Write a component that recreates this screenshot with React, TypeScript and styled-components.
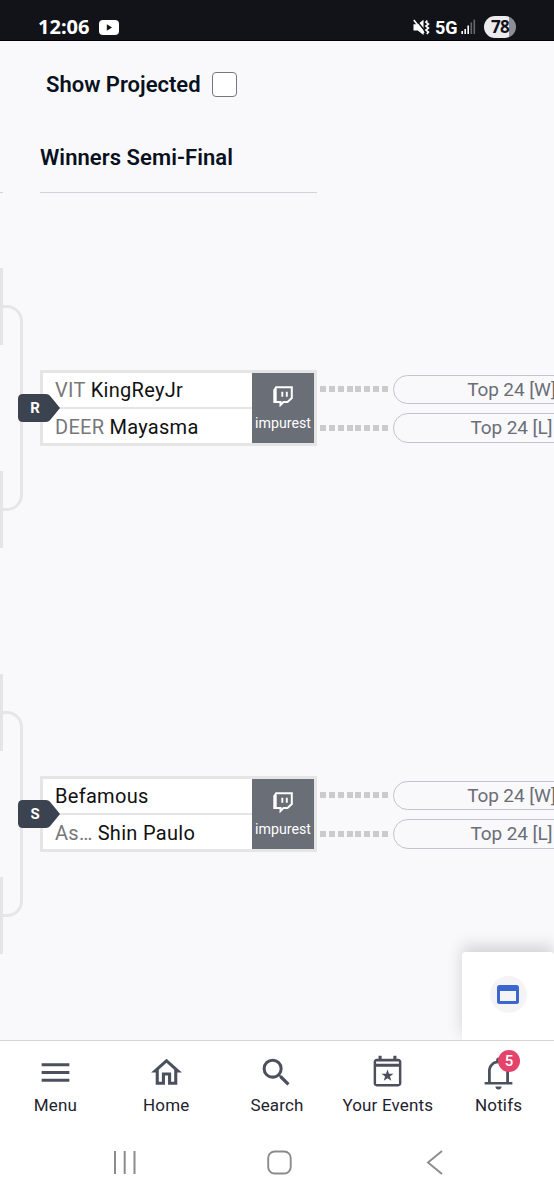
import React from "react";
import styled, { createGlobalStyle } from "styled-components";

const Global = createGlobalStyle`
  *, *::before, *::after { box-sizing: border-box; }
  body { margin: 0; background: #fff; font-family: Roboto, "Liberation Sans", sans-serif; overflow: hidden; }
`;

const Screen = styled.div`
  width: 554px;
  height: 1200px;
  display: flex;
  flex-direction: column;
  overflow: hidden;
`;

const StatusBar = styled.header`
  height: 41px;
  flex: none;
  display: flex;
  align-items: flex-start;
  background: #121319;
  border-bottom: 1px solid #020204;
  color: #fff;
  padding: 15px 38px 0 38px;
`;

const Clock = styled.span`
  font: 700 20px/24px "Noto Sans", sans-serif;
  width: 52px;
  white-space: nowrap;
`;

const StatusIcon = styled.svg<{ $left?: number; $top?: number }>`
  flex: none;
  margin-left: ${(p) => p.$left ?? 0}px;
  margin-top: ${(p) => p.$top ?? 0}px;
`;

const Spacer = styled.div`
  flex: 1;
`;

const Network = styled.span`
  font: 700 18px/22px Roboto, sans-serif;
  margin-left: 5px;
  margin-top: 2px;
  width: 24px;
  white-space: nowrap;
`;

const Battery = styled.span`
  width: 32px;
  height: 22px;
  border-radius: 11px;
  margin-left: 8px;
  margin-top: 1px;
  background: linear-gradient(90deg, #ececef 0 25px, #8d8d92 25px);
  color: #121319;
  font: 700 17px/22px "Noto Sans", sans-serif;
  text-align: center;
  letter-spacing: -0.6px;
`;

const Main = styled.main`
  position: relative;
  height: 999px;
  flex: none;
  overflow: hidden;
  background: #f9f9fc;
`;

const ProjectedToggle = styled.label`
  display: flex;
  align-items: center;
  height: 28px;
  margin: 29px 0 0 46px;
  color: #091120;
  font-size: 22px;
  font-weight: 600;
`;

const ToggleText = styled.span`
  width: 166px;
  white-space: nowrap;
`;

const CheckBox = styled.span`
  width: 25px;
  height: 25px;
  border: 1.5px solid #77777a;
  border-radius: 4px;
  background: #fff;
`;

const RoundHeaders = styled.div`
  display: flex;
  gap: 37px;
  height: 50px;
  margin-top: 45px;
`;

const RoundHeader = styled.h2<{ $width: number }>`
  width: ${(p) => p.$width}px;
  margin: 0;
  border-bottom: 1.5px solid #d2d2d6;
  color: #091120;
  font-size: 22px;
  font-weight: 600;
  letter-spacing: 0.06px;
  line-height: 30px;
  white-space: nowrap;
`;

const Bracket = styled.section`
  display: flex;
  flex-direction: column;
  gap: 126px;
  padding-top: 75px;
`;

const SetRow = styled.div`
  display: flex;
  align-items: center;
  height: 280px;
`;

const Feeders = styled.div`
  flex: none;
  width: 3px;
  height: 280px;
  display: flex;
  flex-direction: column;
  justify-content: space-between;
`;

const Feeder = styled.div`
  height: 77px;
  background: #e5e5e6;
`;

const Connector = styled.div`
  flex: none;
  width: 20px;
  height: 206px;
  border: 3px solid #e6e6e8;
  border-left: 0;
  border-radius: 0 16px 16px 0;
`;

const Match = styled.article`
  position: relative;
  flex: none;
  width: 277px;
  height: 76px;
  margin-left: 17px;
  display: flex;
  border: 3px solid #e5e5e6;
  background: #fff;
`;

const Players = styled.div`
  flex: 1;
  display: flex;
  flex-direction: column;
`;

const Player = styled.div`
  height: 34px;
  padding-left: 12px;
  font-size: 20px;
  letter-spacing: 0.3px;
  line-height: 34px;
  color: #111;
  white-space: nowrap;
  & + & {
    height: 36px;
    border-top: 2px solid #e5e5e6;
    line-height: 36px;
  }
`;

const Team = styled.span`
  color: #77777a;
  margin-right: 5px;
`;

const Stream = styled.div`
  width: 62px;
  background: #6a6e76;
  color: #fff;
  display: flex;
  flex-direction: column;
  align-items: center;
  padding-top: 13px;
  font-size: 14.2px;
  line-height: 20px;
`;

const StreamName = styled.span`
  margin-top: 6px;
`;

const SetTag = styled.div`
  position: absolute;
  left: -25px;
  top: 21px;
  width: 42px;
  height: 28px;
  svg { position: absolute; left: 0; top: 0; }
`;

const TagLetter = styled.span`
  position: relative;
  display: block;
  width: 34px;
  text-align: center;
  color: #fff;
  font: 700 15px/28px Roboto, sans-serif;
`;

const Outcomes = styled.div`
  flex: none;
  display: flex;
  flex-direction: column;
  gap: 9px;
  margin-left: 3px;
  padding-top: 1px;
`;

const Outcome = styled.div`
  display: flex;
  align-items: center;
`;

const Dashes = styled.div`
  width: 69px;
  height: 6px;
  margin-right: 4px;
  background: repeating-linear-gradient(90deg, #cbcbcd 0 6px, transparent 6px 8.85px);
`;

const Pill = styled.div`
  width: 237px;
  flex: none;
  height: 29.5px;
  border: 1.5px solid #c4c4c8;
  border-radius: 15px;
  color: #6a6e76;
  font-size: 19px;
  letter-spacing: -0.1px;
  line-height: 28px;
  text-align: center;
`;

const FloatingCard = styled.aside`
  position: absolute;
  right: 0;
  bottom: 0;
  width: 92px;
  height: 88px;
  border-radius: 4px 4px 0 0;
  background: #fff;
  box-shadow: 0 -6px 16px rgba(0, 0, 0, 0.16);
  display: grid;
  place-items: center;
`;

const CardIcon = styled.div`
  width: 37px;
  height: 37px;
  margin-top: -3px;
  border-radius: 50%;
  background: #f4f4f6;
  display: grid;
  place-items: center;
`;

const NavBar = styled.nav`
  flex: none;
  height: 85px;
  border-top: 1.5px solid #d4d5d9;
  display: flex;
  background: #fff;
`;

const NavItem = styled.div`
  width: 110.8px;
  display: flex;
  flex-direction: column;
  align-items: center;
  padding-top: 13px;
  color: #1e232e;
  font-size: 17px;
  letter-spacing: 0.15px;
  line-height: 24px;
  white-space: nowrap;
`;

const NavIcon = styled.div`
  position: relative;
  width: 37px;
  height: 37px;
  margin-bottom: 2px;
  color: #4b505c;
  svg { display: block; overflow: visible; }
`;

const Count = styled.span`
  position: absolute;
  left: 18px;
  top: -4px;
  width: 22px;
  height: 22px;
  border-radius: 50%;
  background: #e4446b;
  color: #fff;
  font: 500 15px/22px Roboto, sans-serif;
  text-align: center;
`;

const SystemNav = styled.footer`
  flex: 1;
  display: flex;
  background: #fff;
  padding: 24px 0 0 112px;
`;

const SystemIcon = styled.svg`
  flex: none;
  margin-right: 129px;
`;

const Twitch = () => (
  <svg width="20" height="21" viewBox="0 0 20 21" fill="none" stroke="#fff">
    <path d="M1.3 4 3.2 1.2H18.8V12L14.5 16H10.5L7.5 19V16H1.3Z" strokeWidth="2" />
    <path d="M2.7 3V15" strokeWidth="2" />
    <path d="M9.3 5.8V10.8M13.8 5.8V10.8" strokeWidth="1.9" />
  </svg>
);

const glyphs: Record<string, React.ReactNode> = {
  Menu: <path d="M3 6h18v2H3zM3 11h18v2H3zM3 16h18v2H3z" />,
  Home: <path d="M12 5.69l5 4.5V18h-2v-6H9v6H7v-7.81l5-4.5M12 3L2 12h3v8h6v-6h2v6h6v-8h3L12 3z" />,
  Search: (
    <path d="M15.5 14h-.79l-.28-.27A6.471 6.471 0 0 0 16 9.5 6.5 6.5 0 1 0 9.5 16c1.61 0 3.09-.59 4.23-1.57l.27.28v.79l5 4.99L20.49 19l-4.99-5zm-6 0C7.01 14 5 11.99 5 9.5S7.01 5 9.5 5 14 7.01 14 9.5 11.99 14 9.5 14z" />
  ),
  "Your Events": (
    <>
      <path fillRule="evenodd" d="M6.2 1.2h2V3h7.6V1.2h2V3H19c1.1 0 2 .9 2 2v14c0 1.1-.9 2-2 2H5c-1.1 0-2-.9-2-2V5c0-1.1.9-2 2-2h1.2zM4.6 4.9v1.4h14.800V4.900zM4.600 8.200v11.300h14.800V8.200z" />
      <path d="m12 10 .98 2.75 2.92.08-2.32 1.78.83 2.8L12 15.76 9.59 17.41l.83-2.8-2.32-1.78 2.92-.08z" />
    </>
  ),
  Notifs: (
    <>
      <path fillRule="evenodd" d="M12 2.2c.83 0 1.5.67 1.5 1.5v.6C16.6 5 18.8 7.7 18.8 11v7.2H21v1.6H3v-1.6h2.2V11c0-3.3 2.2-6 5.3-6.7v-.6c0-.83.67-1.5 1.5-1.5zM12 6c-2.9 0-5 2.3-5 5v7.2h10V11c0-2.7-2.1-5-5-5z" />
      <path d="M10 21h4c0 1.1-.9 2-2 2s-2-.9-2-2z" />
    </>
  ),
};

const sets = [
  { tag: "R", players: [["VIT", "KingReyJr"], ["DEER", "Mayasma"]] },
  { tag: "S", players: [["", "Befamous"], ["As…", "Shin Paulo"]] },
];

export default function App() {
  return (
    <Screen>
      <Global />
      <StatusBar>
        <Clock>12:06</Clock>
        <StatusIcon $left={9} $top={5} width="20" height="15" viewBox="0 0 20 15">
          <rect width="20" height="15" rx="4" fill="#fff" />
          <path d="M7.8 4.2 13 7.5 7.8 10.7Z" fill="#121319" />
        </StatusIcon>
        <Spacer />
        <StatusIcon $top={4} width="17" height="17" viewBox="0 0 17 17">
          <path d="M.5 5.2h4.3L10.5.8V16l-5.7-4.6H.5Z" fill="#fff" />
          <path d="M2.2 0 12.5 12.5" stroke="#121319" strokeWidth="1.5" />
          <path d="M.8 1 11 14" stroke="#fff" strokeWidth="1.6" />
          <path d="m14.3 1.5-1.3 1.6 2.4 2-2.4 2 2.4 2-2.4 2 2.4 2-1.6 1.9" stroke="#fff" strokeWidth="1.7" fill="none" />
        </StatusIcon>
        <Network>5G</Network>
        <StatusIcon $left={2} $top={4} width="15" height="16" viewBox="0 0 15 16">
          <path d="M1.2 15v-3M4.2 15V10M7.2 15V6.5" stroke="#fff" strokeWidth="1.6" />
          <path d="M10.3 15V3.5M13.3 15V.5" stroke="#66676c" strokeWidth="1.6" />
        </StatusIcon>
        <Battery>78</Battery>
      </StatusBar>

      <Main>
        <ProjectedToggle>
          <ToggleText>Show Projected</ToggleText>
          <CheckBox />
        </ProjectedToggle>
        <RoundHeaders>
          <RoundHeader $width={3} />
          <RoundHeader $width={277}>Winners Semi-Final</RoundHeader>
        </RoundHeaders>
        <Bracket>
          {sets.map((s) => (
            <SetRow key={s.tag}>
              <Feeders>
                <Feeder />
                <Feeder />
              </Feeders>
              <Connector />
              <Match>
                <Players>
                  {s.players.map(([team, name]) => (
                    <Player key={name}>
                      {team && <Team>{team}</Team>}
                      {name}
                    </Player>
                  ))}
                </Players>
                <Stream>
                  <Twitch />
                  <StreamName>impurest</StreamName>
                </Stream>
                <SetTag>
                  <svg width="42" height="28" viewBox="0 0 42 28">
                    <path d="M5 0H28Q30.5 0 32 1.8L42 14 32 26.2Q30.5 28 28 28H5Q0 28 0 23V5Q0 0 5 0Z" fill="#3b4250" />
                  </svg>
                  <TagLetter>{s.tag}</TagLetter>
                </SetTag>
              </Match>
              <Outcomes>
                <Outcome>
                  <Dashes />
                  <Pill>Top 24 [W]</Pill>
                </Outcome>
                <Outcome>
                  <Dashes />
                  <Pill>Top 24 [L]</Pill>
                </Outcome>
              </Outcomes>
            </SetRow>
          ))}
        </Bracket>
        <FloatingCard>
          <CardIcon>
            <svg width="22" height="19" viewBox="0 0 22 19" fill="#3b66cf">
              <path fillRule="evenodd" d="M2.5 0h17Q22 0 22 2.5v14Q22 19 19.5 19h-17Q0 19 0 16.5v-14Q0 0 2.5 0ZM3 6v10h16V6Z" />
            </svg>
          </CardIcon>
        </FloatingCard>
      </Main>

      <NavBar>
        {Object.entries(glyphs).map(([label, glyph]) => (
          <NavItem key={label}>
            <NavIcon>
              <svg width="37" height="37" viewBox="0 0 24 24" fill="currentColor">
                {glyph}
              </svg>
              {label === "Notifs" && <Count>5</Count>}
            </NavIcon>
            {label}
          </NavItem>
        ))}
      </NavBar>
      <SystemNav>
        <SystemIcon width="26" height="26" viewBox="0 0 26 26" stroke="#8b8b8b" strokeWidth="2">
          <path d="M3 2V25M12.7 2V25M22.5 2V25" />
        </SystemIcon>
        <SystemIcon width="26" height="26" viewBox="0 0 26 26" fill="none" stroke="#8b8b8b" strokeWidth="1.9">
          <rect x="1.2" y="2.5" width="22.5" height="22" rx="6.5" />
        </SystemIcon>
        <SystemIcon width="26" height="26" viewBox="0 0 26 26" fill="none" stroke="#8b8b8b" strokeWidth="1.9">
          <path d="M20 2 6 13.5 20 25" />
        </SystemIcon>
      </SystemNav>
    </Screen>
  );
}
